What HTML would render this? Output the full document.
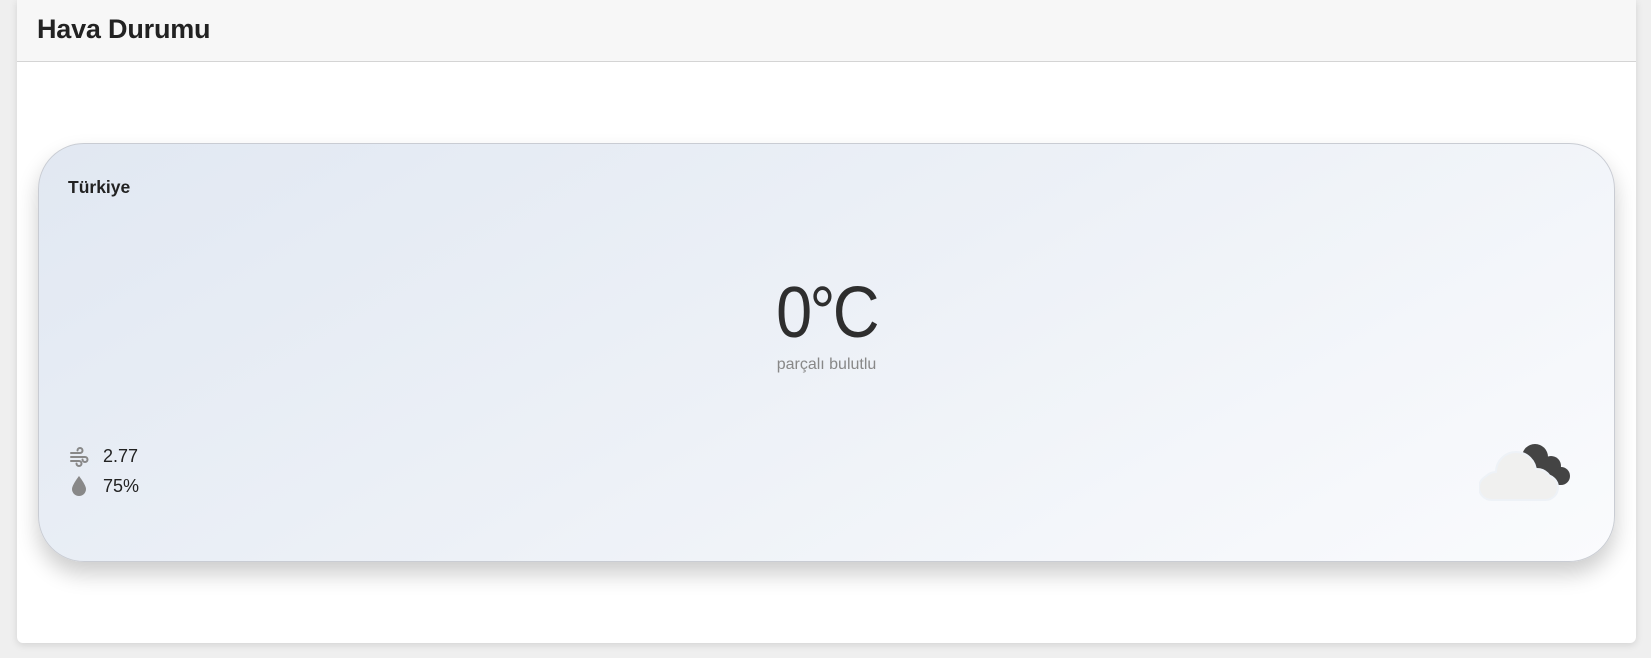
<!DOCTYPE html>
<html><head><meta charset="utf-8"><style>
html,body{margin:0;padding:0;background:#efefef;width:1651px;height:658px;overflow:hidden;font-family:"Liberation Sans",sans-serif}
.panel{position:absolute;left:17px;top:0;width:1619px;height:643px;background:#fff;border-radius:0 0 6px 6px;box-shadow:0 2px 8px rgba(0,0,0,.12)}
.head{height:62px;background:#f7f7f7;border-bottom:1px solid #d4d4d4;box-sizing:border-box}
.head h1{margin:0;position:absolute;left:20px;top:14px;font-size:27px;font-weight:bold;color:#222;letter-spacing:-0.2px}
.card{position:absolute;left:38px;top:143px;width:1577px;height:419px;box-sizing:border-box;border:1px solid #c9ccd3;border-radius:46px;background:linear-gradient(150deg,#e1e8f2 0%,#edf1f7 50%,#fafbfd 100%);box-shadow:0 12px 22px rgba(0,0,0,.2)}
.t{position:absolute;color:#222}
</style></head><body>
<div class="panel"><div class="head"><h1>Hava Durumu</h1></div></div>
<div class="card">
<div class="t" style="left:29px;top:33px;font-size:17.5px;font-weight:bold">Türkiye</div>
<div class="t" style="left:0;width:100%;text-align:center;top:128px;font-size:72px;color:#2e2e2e;letter-spacing:-3px;transform:scaleX(0.9)">0°C</div>
<div class="t" style="left:0;width:100%;text-align:center;top:212px;font-size:16px;color:#888">parçalı bulutlu</div>
<svg style="position:absolute;left:30px;top:303px" width="20" height="20" viewBox="0 0 20 20" fill="none" stroke="#888" stroke-width="2" stroke-linecap="round"><path d="M2 6h9a2.5 2.5 0 1 0-2.5-2.5M2 10h14a2.5 2.5 0 1 1-2.5 2.5M2 14h8a2.5 2.5 0 1 1-2.5 2.5"/></svg>
<div class="t" style="left:64px;top:302px;font-size:18px">2.77</div>
<svg style="position:absolute;left:32px;top:331px" width="16" height="22" viewBox="0 0 16 22"><path d="M8 1C8 1 1 10 1 14a7 7 0 0 0 14 0C15 10 8 1 8 1z" fill="#888"/></svg>
<div class="t" style="left:64px;top:332px;font-size:18px">75%</div>
<svg style="position:absolute;left:1440px;top:280px" width="95" height="80" viewBox="0 0 95 80">
<g fill="#444"><circle cx="56" cy="33" r="13"/><circle cx="72" cy="42" r="10"/><circle cx="82" cy="52" r="9"/><polygon points="45,40 60,30 75,38 86,46 82,61 50,61"/></g>
<g fill="#f0f0ef" stroke="#eef2f7" stroke-width="4"><circle cx="37" cy="48" r="19"/><circle cx="17" cy="62" r="13"/><circle cx="58" cy="60" r="14"/><rect x="1" y="52" width="77" height="23" rx="11.5"/></g>
<g fill="#f0f0ef"><circle cx="37" cy="48" r="19"/><circle cx="17" cy="62" r="13"/><circle cx="58" cy="60" r="14"/><rect x="1" y="52" width="77" height="23" rx="11.5"/></g>
</svg>
</div>
</body></html>
